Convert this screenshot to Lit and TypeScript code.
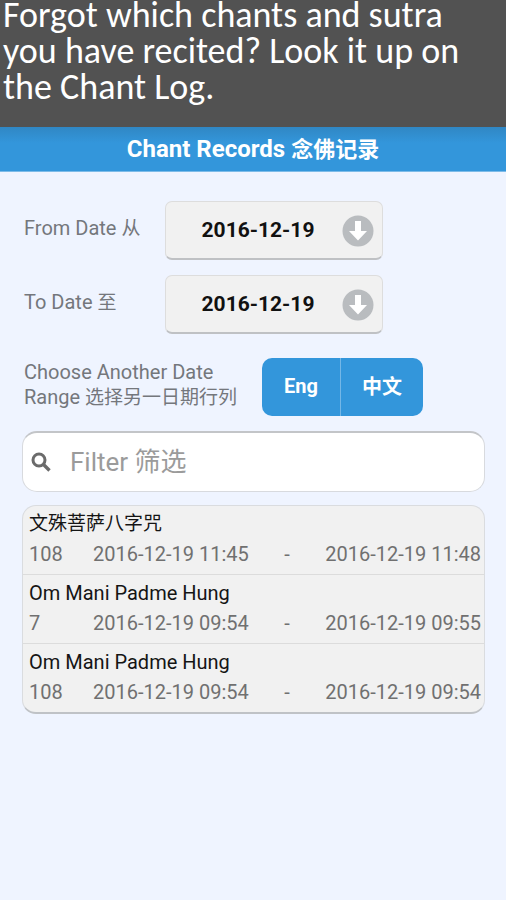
import { LitElement, html, css } from "lit";
import { customElement, property, state } from "lit/decorators.js";

interface ChantRecord {
  name: string;
  lang: string;
  count: number;
  start: string;
  end: string;
}

const RECORDS: ChantRecord[] = [
  { name: "文殊菩萨八字咒", lang: "zh", count: 108, start: "2016-12-19 11:45", end: "2016-12-19 11:48" },
  { name: "Om Mani Padme Hung", lang: "en", count: 7, start: "2016-12-19 09:54", end: "2016-12-19 09:55" },
  { name: "Om Mani Padme Hung", lang: "en", count: 108, start: "2016-12-19 09:54", end: "2016-12-19 09:54" },
];

@customElement("date-field")
export class DateField extends LitElement {
  @property() label = "";
  @property() labelZh = "";
  @property() value = "";

  static styles = css`
    :host {
      display: flex;
      align-items: center;
    }
    .label {
      width: 141px;
      padding: 0 0 4px 2px;
      box-sizing: border-box;
      font-size: 20px;
      line-height: 24px;
      color: #74777c;
    }
    .zh {
      font-size: 19px;
    }
    .box {
      position: relative;
      margin-left: 2px;
      width: 218px;
    }
    .select {
      appearance: none;
      display: block;
      width: 100%;
      height: 59px;
      padding: 0 52px 1px 20px;
      border: 1px solid #dddddd;
      border-bottom: 2px solid #bfc1c4;
      border-radius: 7px;
      background: #f1f1f1;
      font: inherit;
      font-size: 21px;
      font-weight: 700;
      text-align: center;
      text-align-last: center;
      color: #111111;
    }
    .icon {
      position: absolute;
      right: 9px;
      top: 14px;
      width: 32px;
      height: 32px;
      pointer-events: none;
    }
  `;

  render() {
    return html`
      <label class="label" for="date">${this.label} <span class="zh" lang="zh">${this.labelZh}</span></label>
      <div class="box">
        <select class="select" id="date">
          <option>${this.value}</option>
        </select>
        <svg class="icon" viewBox="0 0 32 32" aria-hidden="true">
          <circle cx="16" cy="16" r="15.5" fill="#b9bcbf" />
          <path d="M13 6h6v10h6L16 25.5 7 16h6z" fill="#fff" />
        </svg>
      </div>
    `;
  }
}

@customElement("app-root")
export class AppRoot extends LitElement {
  @state() private query = "";

  static styles = css`
    :host {
      display: block;
      min-height: 100vh;
      background: #eff4ff;
      font-family: Roboto, "Noto Sans CJK SC", sans-serif;
    }
    .banner {
      overflow: hidden;
      padding: 0 20px 22px 3px;
      background: #525252;
      color: #ffffff;
    }
    .intro {
      margin: -3px 0 0;
      font-family: Carlito, Lato, sans-serif;
      font-size: 36px;
      line-height: 36px;
    }
    .bar {
      margin: 0;
      height: 45px;
      background: linear-gradient(#3087c4, #3396db 16px);
      border-bottom: 1px solid #7dbbe8;
      box-sizing: border-box;
      color: #ffffff;
      font-size: 24px;
      font-weight: 700;
      line-height: 45px;
      text-align: center;
    }
    .bar-zh {
      font-size: 22px;
    }
    .zh {
      font-size: 19px;
    }
    .content {
      display: flex;
      flex-direction: column;
      gap: 15px;
      padding: 29px 21px 29px 22px;
    }
    .range {
      display: flex;
      align-items: center;
      gap: 20px;
      padding-top: 9px;
    }
    .range-label {
      width: 220px;
      padding: 0 0 4px 2px;
      box-sizing: border-box;
      font-size: 20px;
      line-height: 25px;
      color: #74777c;
    }
    .group {
      display: flex;
      border-radius: 10px;
      overflow: hidden;
    }
    .lang {
      height: 58px;
      width: 82px;
      padding: 0 0 3px;
      border: 0;
      background: #3396db;
      color: #ffffff;
      font: inherit;
      font-size: 20px;
      font-weight: 700;
    }
    .lang:first-child {
      width: 79px;
      border-right: 1px solid #74b7e7;
    }
    .search {
      display: flex;
      align-items: center;
      height: 61px;
      box-sizing: border-box;
      padding: 0 8px;
      border: 1px solid #d8dade;
      border-top: 2px solid #c3c5c8;
      border-radius: 15px;
      background: #ffffff;
    }
    .glass {
      flex: none;
      width: 20px;
      height: 20px;
    }
    .input {
      flex: 1;
      min-width: 0;
      height: 48px;
      padding: 0 0 0 19px;
      border: 0;
      outline: 0;
      background: transparent;
      font: inherit;
      font-size: 26px;
      color: #333333;
    }
    .input::placeholder {
      color: #9b9b9b;
      opacity: 1;
    }
    .list {
      list-style: none;
      margin: -2px 0 0;
      padding: 0;
      border: 1px solid #dadcdf;
      border-bottom: 2px solid #bfc2c6;
      border-radius: 14px;
      background: #f1f1f1;
      overflow: hidden;
      font-size: 20px;
    }
    .row {
      padding: 5px 3px 7px 6px;
      line-height: 26px;
    }
    .row + .row {
      border-top: 1px solid #dcdcdc;
    }
    .name {
      color: #151515;
    }
    .name:lang(zh) {
      font-size: 19px;
    }
    .detail {
      display: grid;
      grid-template-columns: 64px auto 1fr auto;
      padding-top: 4px;
      color: #707070;
    }
    .dash {
      text-align: center;
    }
  `;

  private onInput(e: Event) {
    this.query = (e.target as HTMLInputElement).value;
  }

  render() {
    const q = this.query.toLowerCase();
    const rows = RECORDS.filter((r) => r.name.toLowerCase().includes(q));
    return html`
      <header class="banner">
        <p class="intro">Forgot which chants and sutra you have recited? Look it up on the Chant Log.</p>
      </header>
      <h1 class="bar">Chant Records <span class="bar-zh" lang="zh">念佛记录</span></h1>
      <main class="content">
        <date-field label="From Date" .labelZh=${"从"} value="2016-12-19"></date-field>
        <date-field label="To Date" .labelZh=${"至"} value="2016-12-19"></date-field>
        <div class="range">
          <span class="range-label" id="range"
            >Choose Another Date Range <span class="zh" lang="zh">选择另一日期行列</span></span
          >
          <div class="group" role="group" aria-labelledby="range">
            <button class="lang" type="button">Eng</button>
            <button class="lang" type="button">中文</button>
          </div>
        </div>
        <div class="search">
          <svg class="glass" viewBox="0 0 20 20" aria-hidden="true">
            <circle cx="8" cy="8" r="6" fill="none" stroke="#6b6b6b" stroke-width="3" />
            <path d="M12.5 12.5L18.5 18.5" stroke="#6b6b6b" stroke-width="3.4" />
          </svg>
          <input
            class="input"
            type="text"
            aria-label="Filter 筛选"
            placeholder="Filter 筛选"
            .value=${this.query}
            @input=${this.onInput}
          />
        </div>
        <ul class="list">
          ${rows.map(
            (r) => html`
              <li class="row">
                <div class="name" lang=${r.lang}>${r.name}</div>
                <div class="detail">
                  <span>${r.count}</span>
                  <span>${r.start}</span>
                  <span class="dash">-</span>
                  <span>${r.end}</span>
                </div>
              </li>
            `,
          )}
        </ul>
      </main>
    `;
  }
}
